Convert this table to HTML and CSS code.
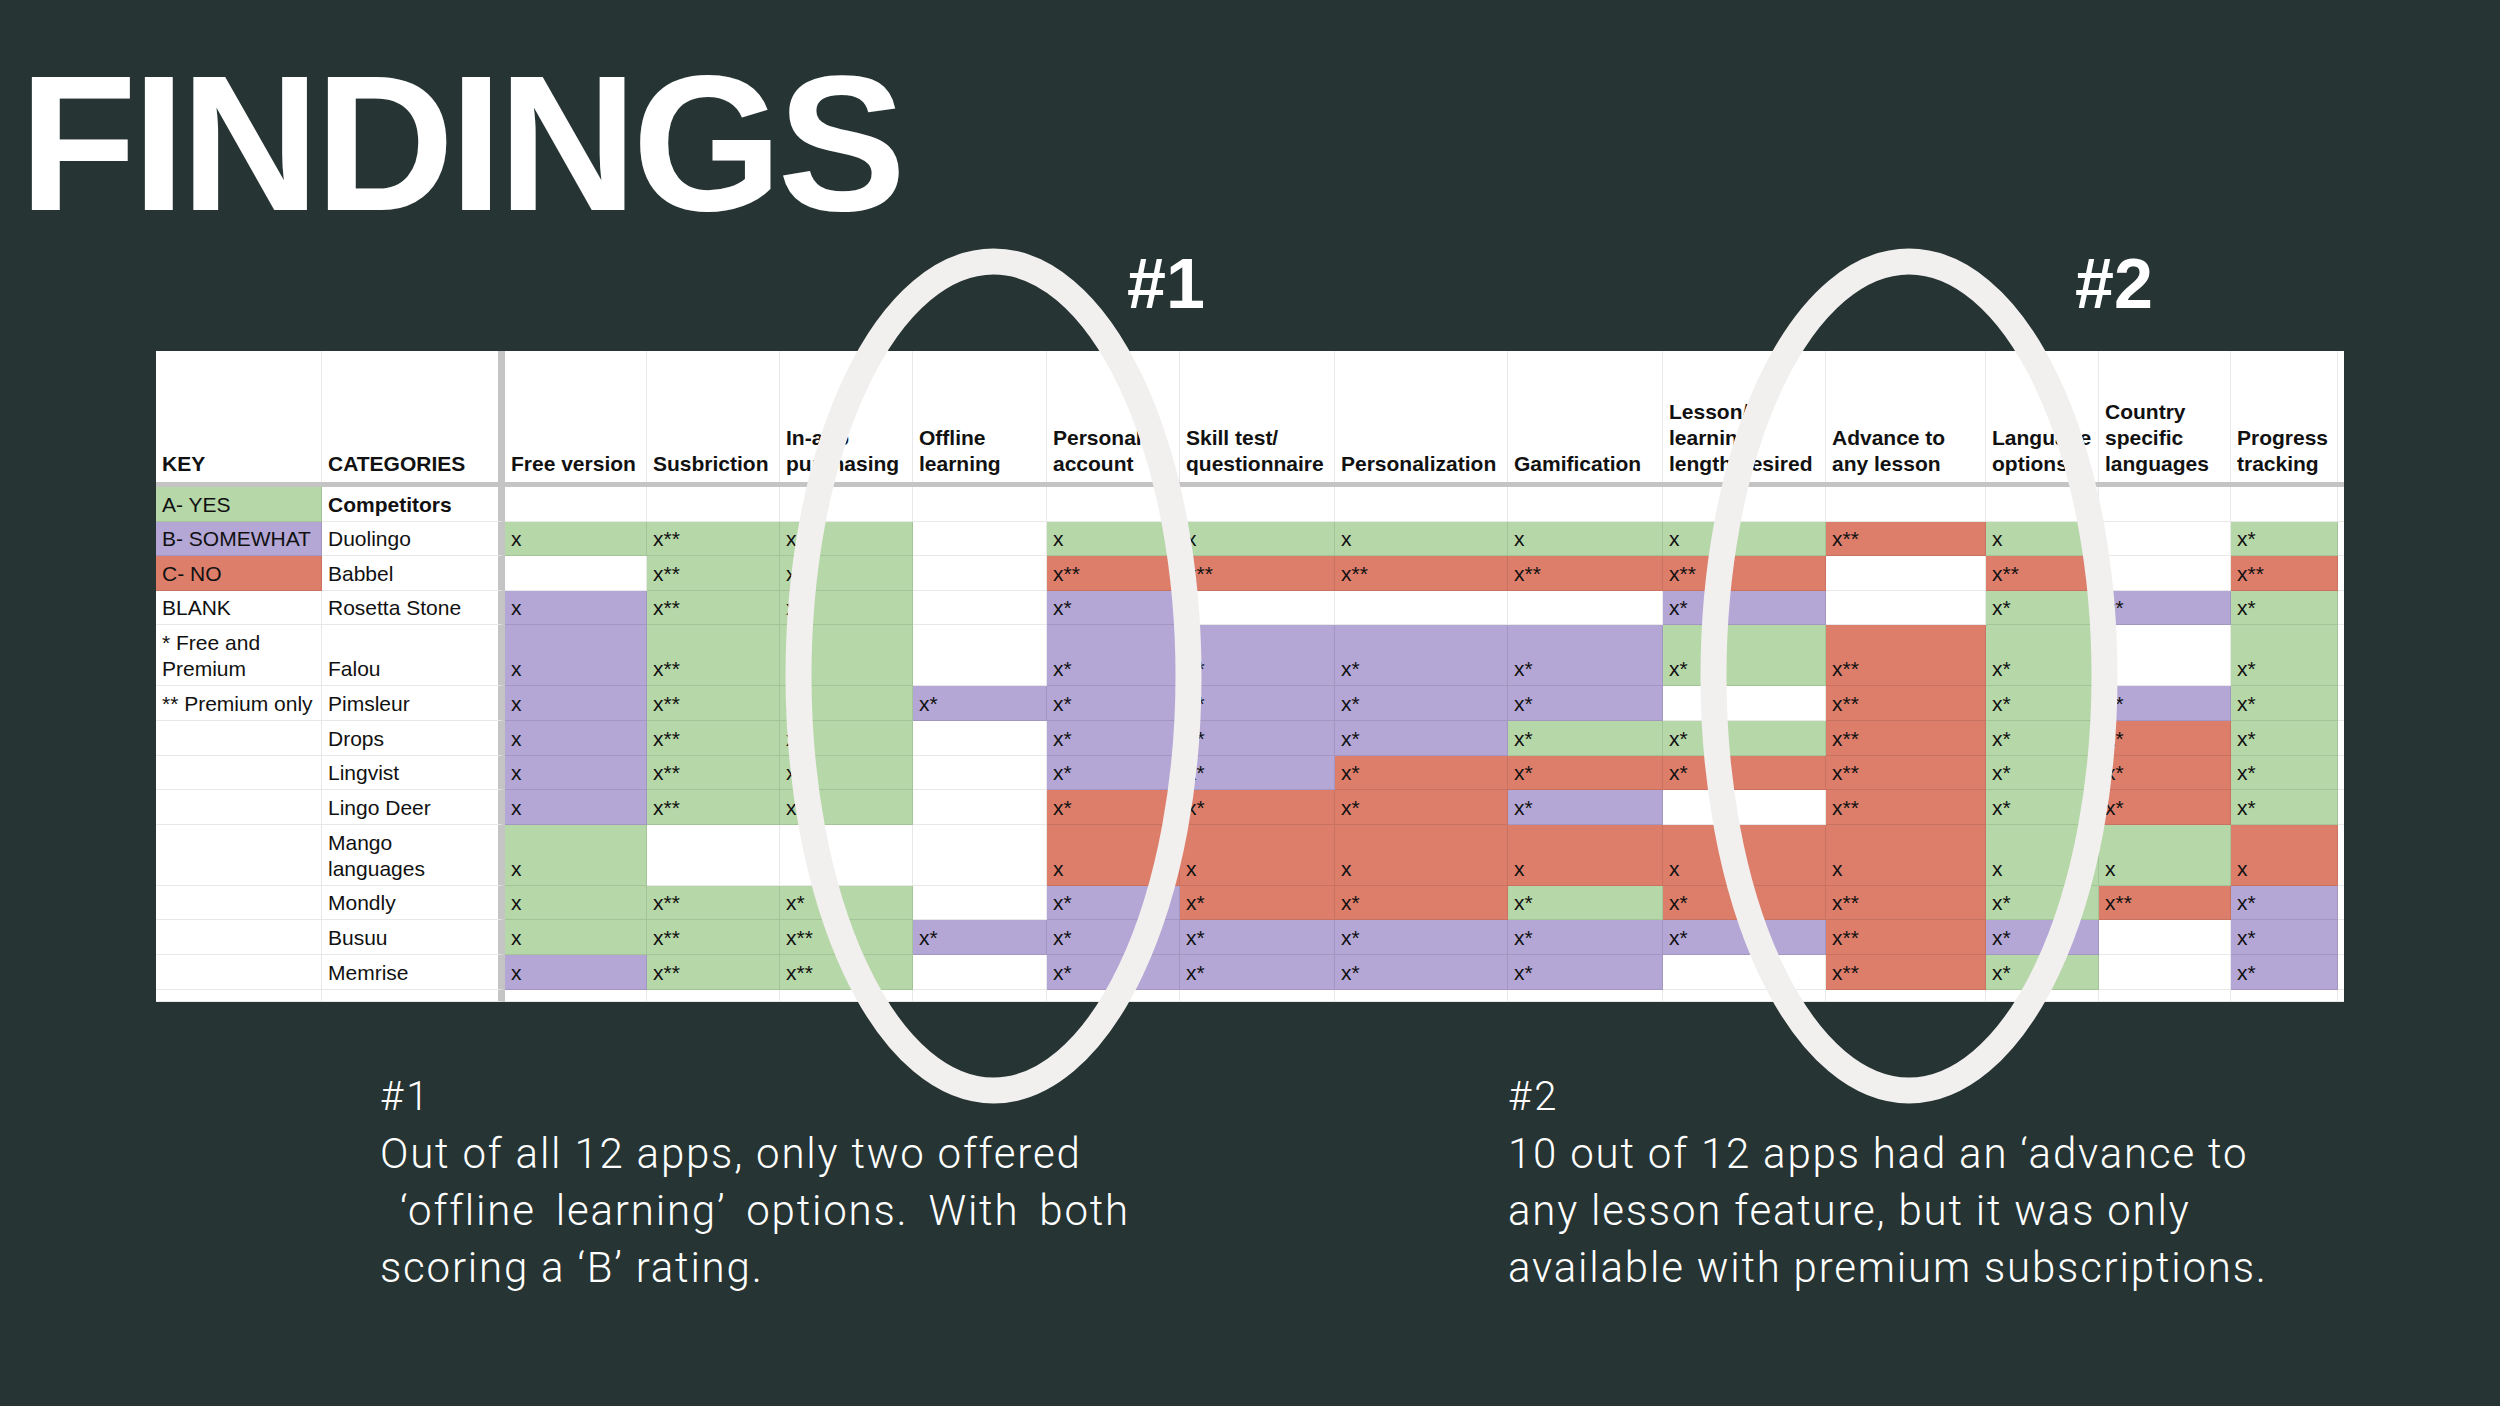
FILE: index.html
```html
<!DOCTYPE html>
<html lang="en">
<head>
<meta charset="utf-8">
<title>Findings</title>
<link rel="stylesheet" href="styles.css">
</head>
<body>
<div class="page">
  <h1 class="title">FINDINGS</h1>
  <div class="labels"><span class="lbl lbl1">#1</span><span class="lbl lbl2">#2</span></div>

  <div class="sheet">
    <div class="row head">
      <div class="c">KEY</div><div class="c">CATEGORIES</div><div class="c">Free version</div><div class="c">Susbriction</div><div class="c"><span>In-app<br>purchasing</span></div><div class="c"><span>Offline<br>learning</span></div><div class="c"><span>Personal<br>account</span></div><div class="c"><span>Skill test/<br>questionnaire</span></div><div class="c">Personalization</div><div class="c">Gamification</div><div class="c"><span>Lesson/<br>learning<br>length desired</span></div><div class="c"><span>Advance to<br>any lesson</span></div><div class="c"><span>Language<br>options</span></div><div class="c"><span>Country<br>specific<br>languages</span></div><div class="c"><span>Progress<br>tracking</span></div><div class="c"></div>
    </div>
    <div class="row">
      <div class="c g">A- YES</div><div class="c b">Competitors</div><div class="c"></div><div class="c"></div><div class="c"></div><div class="c"></div><div class="c"></div><div class="c"></div><div class="c"></div><div class="c"></div><div class="c"></div><div class="c"></div><div class="c"></div><div class="c"></div><div class="c"></div><div class="c"></div>
    </div>
    <div class="row">
      <div class="c p">B- SOMEWHAT</div><div class="c">Duolingo</div><div class="c g">x</div><div class="c g">x**</div><div class="c g">x</div><div class="c"></div><div class="c g">x</div><div class="c g">x</div><div class="c g">x</div><div class="c g">x</div><div class="c g">x</div><div class="c r">x**</div><div class="c g">x</div><div class="c"></div><div class="c g">x*</div><div class="c"></div>
    </div>
    <div class="row">
      <div class="c r">C- NO</div><div class="c">Babbel</div><div class="c"></div><div class="c g">x**</div><div class="c g">x</div><div class="c"></div><div class="c r">x**</div><div class="c r">x**</div><div class="c r">x**</div><div class="c r">x**</div><div class="c r">x**</div><div class="c"></div><div class="c r">x**</div><div class="c"></div><div class="c r">x**</div><div class="c"></div>
    </div>
    <div class="row">
      <div class="c">BLANK</div><div class="c">Rosetta Stone</div><div class="c p">x</div><div class="c g">x**</div><div class="c g">x</div><div class="c"></div><div class="c p">x*</div><div class="c"></div><div class="c"></div><div class="c"></div><div class="c p">x*</div><div class="c"></div><div class="c g">x*</div><div class="c p">x*</div><div class="c g">x*</div><div class="c"></div>
    </div>
    <div class="row tall">
      <div class="c"><span>* Free and<br>Premium</span></div><div class="c">Falou</div><div class="c p">x</div><div class="c g">x**</div><div class="c g">x</div><div class="c"></div><div class="c p">x*</div><div class="c p">x*</div><div class="c p">x*</div><div class="c p">x*</div><div class="c g">x*</div><div class="c r">x**</div><div class="c g">x*</div><div class="c"></div><div class="c g">x*</div><div class="c"></div>
    </div>
    <div class="row">
      <div class="c">** Premium only</div><div class="c">Pimsleur</div><div class="c p">x</div><div class="c g">x**</div><div class="c g">x</div><div class="c p">x*</div><div class="c p">x*</div><div class="c p">x*</div><div class="c p">x*</div><div class="c p">x*</div><div class="c"></div><div class="c r">x**</div><div class="c g">x*</div><div class="c p">x*</div><div class="c g">x*</div><div class="c"></div>
    </div>
    <div class="row">
      <div class="c"></div><div class="c">Drops</div><div class="c p">x</div><div class="c g">x**</div><div class="c g">x</div><div class="c"></div><div class="c p">x*</div><div class="c p">x*</div><div class="c p">x*</div><div class="c g">x*</div><div class="c g">x*</div><div class="c r">x**</div><div class="c g">x*</div><div class="c r">x*</div><div class="c g">x*</div><div class="c"></div>
    </div>
    <div class="row">
      <div class="c"></div><div class="c">Lingvist</div><div class="c p">x</div><div class="c g">x**</div><div class="c g">x</div><div class="c"></div><div class="c p">x*</div><div class="c p">x*</div><div class="c r">x*</div><div class="c r">x*</div><div class="c r">x*</div><div class="c r">x**</div><div class="c g">x*</div><div class="c r">x*</div><div class="c g">x*</div><div class="c"></div>
    </div>
    <div class="row">
      <div class="c"></div><div class="c">Lingo Deer</div><div class="c p">x</div><div class="c g">x**</div><div class="c g">x</div><div class="c"></div><div class="c r">x*</div><div class="c r">x*</div><div class="c r">x*</div><div class="c p">x*</div><div class="c"></div><div class="c r">x**</div><div class="c g">x*</div><div class="c r">x*</div><div class="c g">x*</div><div class="c"></div>
    </div>
    <div class="row tall">
      <div class="c"></div><div class="c"><span>Mango<br>languages</span></div><div class="c g">x</div><div class="c"></div><div class="c"></div><div class="c"></div><div class="c r">x</div><div class="c r">x</div><div class="c r">x</div><div class="c r">x</div><div class="c r">x</div><div class="c r">x</div><div class="c g">x</div><div class="c g">x</div><div class="c r">x</div><div class="c"></div>
    </div>
    <div class="row">
      <div class="c"></div><div class="c">Mondly</div><div class="c g">x</div><div class="c g">x**</div><div class="c g">x*</div><div class="c"></div><div class="c p">x*</div><div class="c r">x*</div><div class="c r">x*</div><div class="c g">x*</div><div class="c r">x*</div><div class="c r">x**</div><div class="c g">x*</div><div class="c r">x**</div><div class="c p">x*</div><div class="c"></div>
    </div>
    <div class="row">
      <div class="c"></div><div class="c">Busuu</div><div class="c g">x</div><div class="c g">x**</div><div class="c g">x**</div><div class="c p">x*</div><div class="c p">x*</div><div class="c p">x*</div><div class="c p">x*</div><div class="c p">x*</div><div class="c p">x*</div><div class="c r">x**</div><div class="c p">x*</div><div class="c"></div><div class="c p">x*</div><div class="c"></div>
    </div>
    <div class="row">
      <div class="c"></div><div class="c">Memrise</div><div class="c p">x</div><div class="c g">x**</div><div class="c g">x**</div><div class="c"></div><div class="c p">x*</div><div class="c p">x*</div><div class="c p">x*</div><div class="c p">x*</div><div class="c"></div><div class="c r">x**</div><div class="c g">x*</div><div class="c"></div><div class="c p">x*</div><div class="c"></div>
    </div>
    <div class="row end">
      <div class="c"></div><div class="c"></div><div class="c"></div><div class="c"></div><div class="c"></div><div class="c"></div><div class="c"></div><div class="c"></div><div class="c"></div><div class="c"></div><div class="c"></div><div class="c"></div><div class="c"></div><div class="c"></div><div class="c"></div><div class="c"></div>
    </div>
  </div>

  <div class="notes">
    <div class="note n1">
      <h2>#1</h2>
      <p>Out of all 12 apps, only two offered<br><span class="wide">&nbsp;‘offline learning’ options. With both</span><br>scoring a ‘B’ rating.</p>
    </div>
    <div class="note n2">
      <h2>#2</h2>
      <p>10 out of 12 apps had an ‘advance to<br>any lesson feature, but it was only<br>available with premium subscriptions.</p>
    </div>
  </div>

  <svg class="rings" width="2500" height="1406" viewBox="0 0 2500 1406" aria-hidden="true">
    <ellipse cx="993.5" cy="676" rx="195" ry="414.5" fill="none" stroke="#f2efef" stroke-width="26"/>
    <ellipse cx="1909" cy="676" rx="195.5" ry="414.5" fill="none" stroke="#f2efef" stroke-width="26"/>
  </svg>
</div>
</body>
</html>
```

FILE: styles.css
```css
* { box-sizing: border-box; }

body {
  margin: 0;
  background: #263433;
  width: 2500px;
  height: 1406px;
  overflow: hidden;
}

.page {
  position: relative;
  width: 2500px;
  height: 1406px;
}

.title {
  margin: 0;
  height: 240px;
  padding: 46.6px 0 0 19px;
  font-family: "Liberation Sans", Arial, sans-serif;
  font-weight: 700;
  font-size: 193px;
  line-height: 193px;
  letter-spacing: -5px;
  color: #ffffff;
}

.labels {
  display: grid;
  grid-template-columns: 1127px 948px auto;
  height: 111px;
  padding-top: 9px;
  font-family: "Liberation Sans", Arial, sans-serif;
  font-weight: 700;
  font-size: 70px;
  line-height: 70px;
  color: #ffffff;
}
.lbl1 { grid-column: 2; }
.lbl2 { grid-column: 3; }

.sheet {
  margin-left: 156px;
  width: 2188px;
  height: 651px;
  overflow: hidden;
  background: #ffffff;
  font-family: "Liberation Sans", Arial, sans-serif;
  font-size: 21px;
  color: #111111;
}

.row {
  display: grid;
  grid-template-columns: 166px 183px 142px 133px 133px 134px 133px 155px 173px 155px 163px 160px 113px 132px 107px 6px;
  height: 34.6px;
}
.row.head {
  height: 136px;
  border-bottom: 5px solid #c4c4c4;
  font-weight: 700;
}
.row.tall { height: 61px; }
.row.end { height: 12.4px; }

.c {
  display: flex;
  align-items: flex-end;
  padding: 0 6px 3px;
  line-height: 26px;
  white-space: nowrap;
  overflow: hidden;
  border-right: 1px solid rgba(0, 0, 0, 0.09);
  border-bottom: 1px solid rgba(0, 0, 0, 0.09);
}
.c:nth-child(2) { border-right: 7px solid #c4c4c4; }
.head .c { padding-bottom: 5px; border-bottom: 0; }

.g { background: #b6d7a8; }
.p { background: #b4a7d6; }
.r { background: #dd7e6b; }
.b { font-weight: 700; }

.notes {
  display: grid;
  grid-template-columns: 380px 1128px auto;
  margin-top: 74px;
  color: #ffffff;
  font-family: Roboto, "Liberation Sans", sans-serif;
  font-weight: 300;
}
.n1 { grid-column: 2; }
.n2 { grid-column: 3; }
.note h2 {
  margin: 0;
  font-size: 40px;
  line-height: 42px;
  letter-spacing: 3px;
  font-weight: 300;
}
.note p {
  margin: 6.5px 0 0;
  font-size: 42px;
  line-height: 57px;
  letter-spacing: 1.8px;
  white-space: nowrap;
}
.wide { word-spacing: 8px; }

.rings {
  position: absolute;
  left: 0;
  top: 0;
  pointer-events: none;
}
```
